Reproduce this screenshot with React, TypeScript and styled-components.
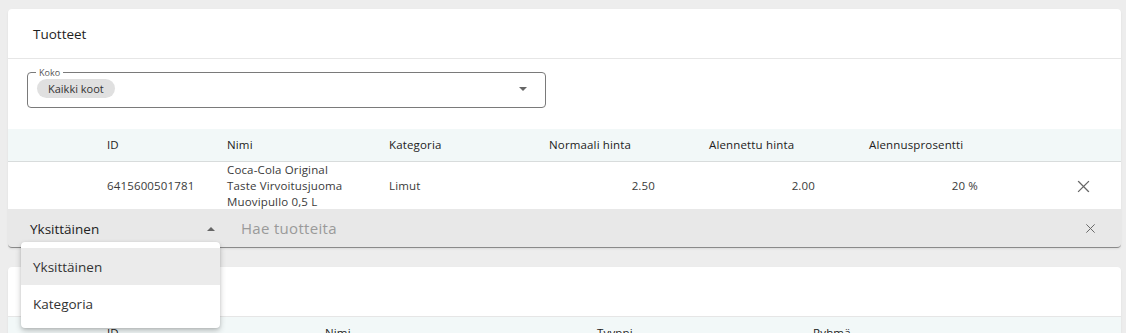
import styled, { createGlobalStyle } from 'styled-components';
import { FunctionComponent } from 'react';

const GlobalStyle = createGlobalStyle`
  html, body {
    margin: 0;
    padding: 0;
    background: #ededed;
    font-family: 'Open Sans', 'Liberation Sans', sans-serif;
    color: #222;
  }
  body {
    overflow: hidden;
  }
`;

const Page = styled.div`
  position: relative;
  padding: 9px 5px 0 8px;
  display: flex;
  flex-direction: column;
  gap: 19px;
  height: 333px;
  box-sizing: border-box;
  overflow: hidden;
`;

const Card = styled.section`
  background: #fff;
  border-radius: 4px;
  box-shadow: 0 1px 2px rgba(0, 0, 0, 0.08);
  flex-shrink: 0;
`;

const CardHeader = styled.div`
  height: 49px;
  padding: 0 25px;
  display: flex;
  align-items: center;
  font-size: 13.5px;
  color: #1e1e1e;
  border-bottom: 1px solid #e6e6e6;
`;

const FilterArea = styled.div`
  padding: 9px 575px 21px 19px;
`;

const Outlined = styled.fieldset`
  margin: 0;
  height: 40px;
  box-sizing: border-box;
  border: 1px solid #7a7a7a;
  border-radius: 4px;
  padding: 0 9px;
  display: flex;
  align-items: center;

  legend {
    font-size: 9px;
    color: #555;
    padding: 0 3px;
    margin-left: -1px;
    line-height: 9px;
  }
`;

const Chip = styled.span`
  display: inline-flex;
  align-items: center;
  height: 19px;
  padding: 0 11px;
  border-radius: 10px;
  background: #e0e0e0;
  font-size: 11px;
  color: #333;
  margin-top: -8px;
`;

const Caret = styled.span<{ $up?: boolean }>`
  margin-left: auto;
  width: 0;
  height: 0;
  border-left: 4px solid transparent;
  border-right: 4px solid transparent;
  ${(p) =>
    p.$up
      ? 'border-bottom: 4px solid #666;'
      : 'border-top: 4px solid #666;'}
`;

const SelectCaret = styled(Caret)`
  margin-right: 9px;
  margin-top: -7px;
`;

const Row = styled.div<{ $cols: string; $head?: boolean }>`
  display: grid;
  grid-template-columns: ${(p) => p.$cols};
  align-items: center;
  font-size: 11.5px;
  color: ${(p) => (p.$head ? '#222' : '#3a3a3a')};
  background: ${(p) => (p.$head ? '#f2f8f8' : '#fff')};
  height: ${(p) => (p.$head ? '32px' : '47px')};
  border-bottom: ${(p) => (p.$head ? '1px solid #d8dcdc' : 'none')};
  letter-spacing: 0.15px;
`;

const Cell = styled.div<{ $num?: boolean }>`
  text-align: ${(p) => (p.$num ? 'right' : 'left')};
  padding-right: ${(p) => (p.$num ? '54px' : '0')};
  line-height: 16px;
`;

const IconButton = styled.button<{ $size: number }>`
  border: none;
  background: none;
  padding: 0;
  display: flex;
  align-items: center;
  justify-content: center;
  cursor: pointer;
  color: #666;

  svg {
    width: ${(p) => p.$size}px;
    height: ${(p) => p.$size}px;
  }
`;

const RowAction = styled(IconButton)`
  margin-left: 43px;
`;

const SearchBar = styled.div`
  height: 39px;
  background: #e8e8e8;
  border-bottom: 1px solid #8a8a8a;
  border-radius: 0 0 4px 4px;
  display: flex;
  align-items: center;
  padding: 0 24px 0 22px;
  box-sizing: border-box;
`;

const ModeSelect = styled.div`
  width: 185px;
  display: flex;
  align-items: center;
  font-size: 13.5px;
  color: #222;
  padding-top: 1px;
`;

const SearchInput = styled.input`
  flex: 1;
  margin-left: 26px;
  padding: 0;
  border: none;
  background: transparent;
  font-family: inherit;
  font-size: 15px;
  letter-spacing: 0.3px;
  color: #222;
  outline: none;

  &::placeholder {
    color: #9a9a9a;
  }
`;

const Menu = styled.ul`
  position: absolute;
  left: 21px;
  top: 242px;
  width: 199px;
  margin: 0;
  padding: 6px 0;
  list-style: none;
  background: #fff;
  border-radius: 4px;
  box-shadow: 0 3px 6px rgba(0, 0, 0, 0.2), 0 1px 3px rgba(0, 0, 0, 0.12);
  z-index: 10;
`;

const MenuItem = styled.li<{ $selected?: boolean }>`
  height: 37px;
  display: flex;
  align-items: center;
  padding: 0 12px;
  font-size: 13.5px;
  color: #333;
  background: ${(p) => (p.$selected ? '#ebebeb' : 'transparent')};
`;

const SecondHeader = styled.div`
  height: 49px;
  border-bottom: 1px solid #e6e6e6;
`;

const CloseIcon = () => (
  <svg viewBox="0 0 24 24" fill="none" stroke="currentColor" strokeWidth="1.8" strokeLinecap="square">
    <path d="M5 5 L19 19 M19 5 L5 19" />
  </svg>
);

const productCols = '99px 120px 162px 160px 160px 160px 163px 1fr';
const groupCols = '99px 218px 272px 216px 1fr';

const App: FunctionComponent = () => {
  return (
    <>
      <GlobalStyle />
      <Page>
        <Card>
          <CardHeader>Tuotteet</CardHeader>
          <FilterArea>
            <Outlined>
              <legend>Koko</legend>
              <Chip>Kaikki koot</Chip>
              <SelectCaret />
            </Outlined>
          </FilterArea>

          <Row $cols={productCols} $head>
            <Cell />
            <Cell>ID</Cell>
            <Cell>Nimi</Cell>
            <Cell>Kategoria</Cell>
            <Cell>Normaali hinta</Cell>
            <Cell>Alennettu hinta</Cell>
            <Cell>Alennusprosentti</Cell>
            <Cell />
          </Row>
          <Row $cols={productCols}>
            <Cell />
            <Cell>6415600501781</Cell>
            <Cell>
              Coca-Cola Original
              <br />
              Taste Virvoitusjuoma
              <br />
              Muovipullo 0,5 L
            </Cell>
            <Cell>Limut</Cell>
            <Cell $num>2.50</Cell>
            <Cell $num>2.00</Cell>
            <Cell $num>20 %</Cell>
            <Cell>
              <RowAction $size={17}>
                <CloseIcon />
              </RowAction>
            </Cell>
          </Row>

          <SearchBar>
            <ModeSelect>
              Yksittäinen
              <Caret $up />
            </ModeSelect>
            <SearchInput placeholder="Hae tuotteita" />
            <IconButton $size={13}>
              <CloseIcon />
            </IconButton>
          </SearchBar>
        </Card>

        <Card>
          <SecondHeader />
          <Row $cols={groupCols} $head>
            <Cell />
            <Cell>ID</Cell>
            <Cell>Nimi</Cell>
            <Cell>Tyyppi</Cell>
            <Cell>Ryhmä</Cell>
          </Row>
        </Card>

        <Menu>
          <MenuItem $selected>Yksittäinen</MenuItem>
          <MenuItem>Kategoria</MenuItem>
        </Menu>
      </Page>
    </>
  );
};

export default App;
